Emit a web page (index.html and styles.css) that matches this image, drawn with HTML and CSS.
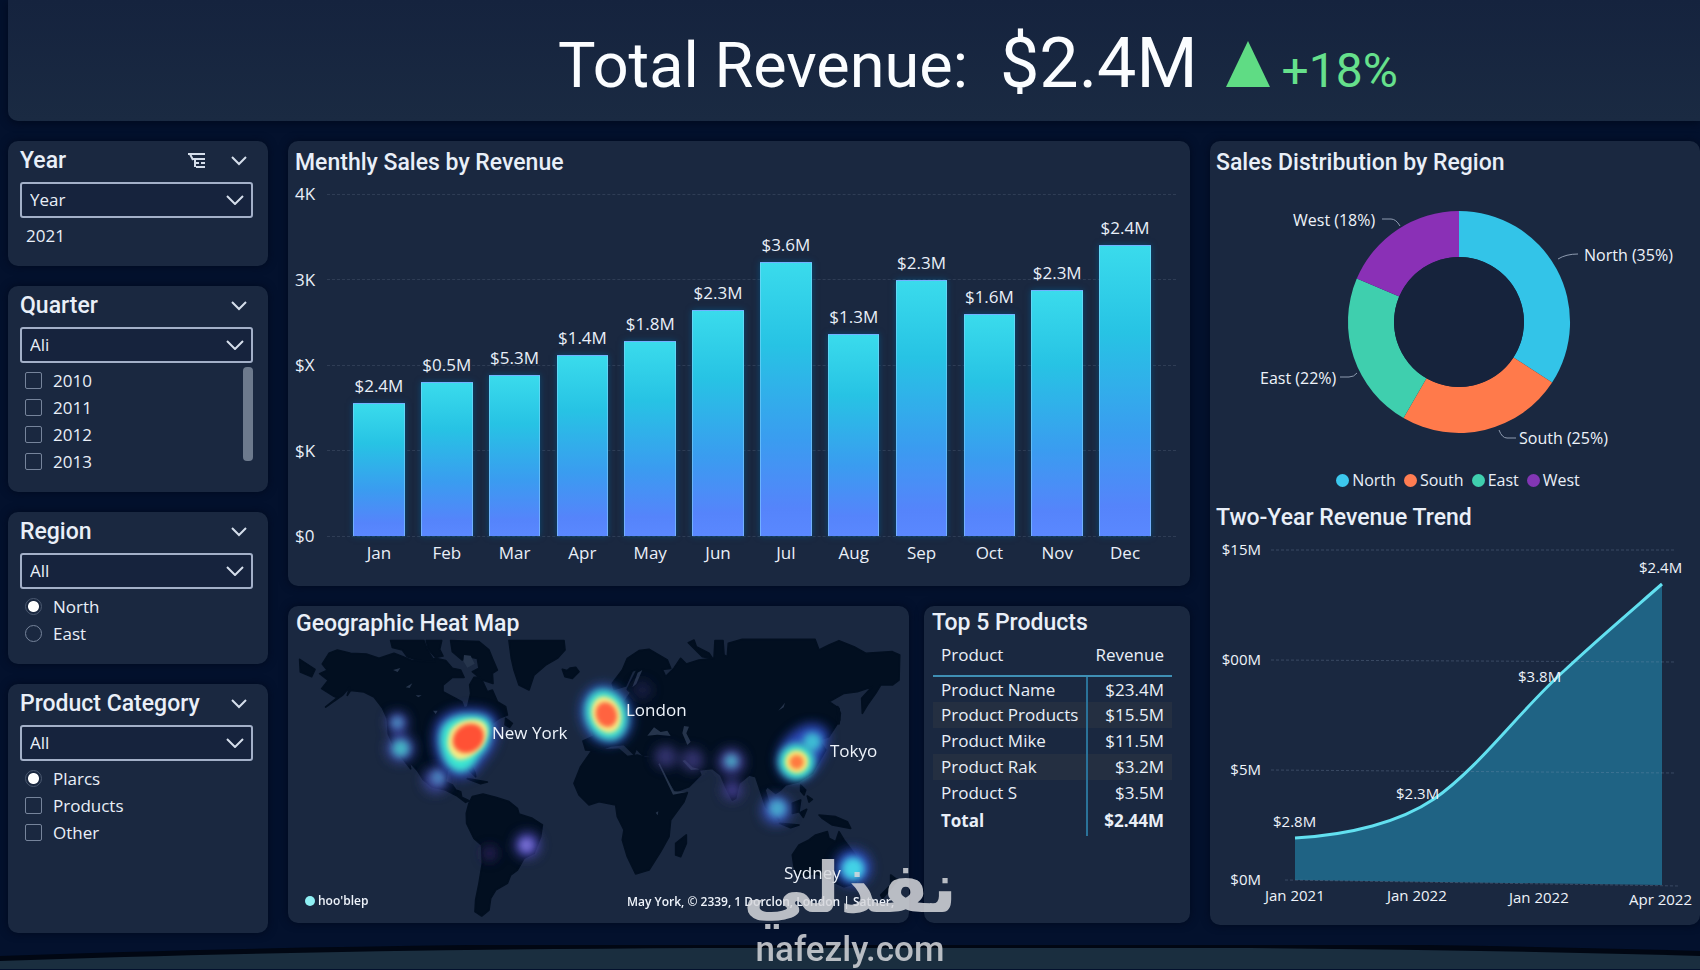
FILE: index.html
```html
<!DOCTYPE html>
<html lang="en">
<head>
    <meta charset="UTF-8">
    <meta name="viewport" content="width=device-width, initial-scale=1.0">
    <title>Total Revenue</title>
    <link rel="stylesheet" href="styles.css">
</head>
<body>
    <header class="headline">
        <h1>Total Revenue:</h1>
        <strong class="total">$2.4M</strong>
        <svg class="up" viewBox="0 0 44 46"><path d="M22 0 44 46H0z"/></svg>
        <span class="growth">+18%</span>
    </header>

    <main class="board">
        <aside class="filters">
            <section class="card filter">
                <div class="filter-head">
                    <h2>Year</h2>
                    <button class="icon-btn" aria-label="Filter">
                        <svg class="filter-icon" viewBox="0 0 20 18"><path d="M1 2h17M3 2l3 6M6 7h12M8 7v8M8 11h4M14 11h4M9 15h9"/></svg>
                    </button>
                    <button class="icon-btn" aria-label="Collapse Year"><svg class="chevron" viewBox="0 0 16 10"><path d="M1 1l7 7 7-7"/></svg></button>
                </div>
                <div class="select">
                    <select aria-label="Year"><option>Year</option></select>
                    <svg class="arrow" viewBox="0 0 18 10"><path d="M1 1l8 8 8-8"/></svg>
                </div>
                <p class="picked">2021</p>
            </section>

            <section class="card filter">
                <div class="filter-head">
                    <h2>Quarter</h2>
                    <button class="icon-btn" aria-label="Collapse Quarter"><svg class="chevron" viewBox="0 0 16 10"><path d="M1 1l7 7 7-7"/></svg></button>
                </div>
                <div class="select">
                    <select aria-label="Quarter"><option>Ali</option></select>
                    <svg class="arrow" viewBox="0 0 18 10"><path d="M1 1l8 8 8-8"/></svg>
                </div>
                <div class="options">
                    <div class="option-list">
                        <label><input type="checkbox">2010</label>
                        <label><input type="checkbox">2011</label>
                        <label><input type="checkbox">2012</label>
                        <label><input type="checkbox">2013</label>
                    </div>
                    <div class="scrollbar"></div>
                </div>
            </section>

            <section class="card filter">
                <div class="filter-head">
                    <h2>Region</h2>
                    <button class="icon-btn" aria-label="Collapse Region"><svg class="chevron" viewBox="0 0 16 10"><path d="M1 1l7 7 7-7"/></svg></button>
                </div>
                <div class="select">
                    <select aria-label="Region"><option>All</option></select>
                    <svg class="arrow" viewBox="0 0 18 10"><path d="M1 1l8 8 8-8"/></svg>
                </div>
                <div class="options">
                    <div class="option-list">
                        <label><input type="radio" name="region" checked>North</label>
                        <label><input type="radio" name="region">East</label>
                    </div>
                </div>
            </section>

            <section class="card filter filter-last">
                <div class="filter-head">
                    <h2>Product Category</h2>
                    <button class="icon-btn" aria-label="Collapse Product Category"><svg class="chevron" viewBox="0 0 16 10"><path d="M1 1l7 7 7-7"/></svg></button>
                </div>
                <div class="select">
                    <select aria-label="Product Category"><option>All</option></select>
                    <svg class="arrow" viewBox="0 0 18 10"><path d="M1 1l8 8 8-8"/></svg>
                </div>
                <div class="options">
                    <div class="option-list">
                        <label><input type="radio" name="category" checked>Plarcs</label>
                        <label><input type="checkbox">Products</label>
                        <label><input type="checkbox">Other</label>
                    </div>
                </div>
            </section>
        </aside>

        <div class="center">
            <section class="card monthly">
                <h2>Menthly Sales by Revenue</h2>
                <div class="chart">
                    <div class="rows">
                        <div class="row"><span>4K</span></div>
                        <div class="row"><span>3K</span></div>
                        <div class="row"><span>$X</span></div>
                        <div class="row"><span>$K</span></div>
                        <div class="row"><span>$0</span></div>
                    </div>
                    <div class="bars">
                        <div class="col"><span>$2.4M</span><div class="bar" style="height: 39%"></div></div>
                        <div class="col"><span>$0.5M</span><div class="bar" style="height: 45%"></div></div>
                        <div class="col"><span>$5.3M</span><div class="bar" style="height: 47%"></div></div>
                        <div class="col"><span>$1.4M</span><div class="bar" style="height: 53%"></div></div>
                        <div class="col"><span>$1.8M</span><div class="bar" style="height: 57%"></div></div>
                        <div class="col"><span>$2.3M</span><div class="bar" style="height: 66%"></div></div>
                        <div class="col"><span>$3.6M</span><div class="bar" style="height: 80%"></div></div>
                        <div class="col"><span>$1.3M</span><div class="bar" style="height: 59%"></div></div>
                        <div class="col"><span>$2.3M</span><div class="bar" style="height: 75%"></div></div>
                        <div class="col"><span>$1.6M</span><div class="bar" style="height: 65%"></div></div>
                        <div class="col"><span>$2.3M</span><div class="bar" style="height: 72%"></div></div>
                        <div class="col"><span>$2.4M</span><div class="bar" style="height: 85%"></div></div>
                    </div>
                </div>
                <div class="months">
                    <span>Jan</span><span>Feb</span><span>Mar</span><span>Apr</span><span>May</span><span>Jun</span>
                    <span>Jul</span><span>Aug</span><span>Sep</span><span>Oct</span><span>Nov</span><span>Dec</span>
                </div>
            </section>

            <section class="card geo">
                <h2>Geographic Heat Map</h2>
                <svg class="map" viewBox="0 0 621 288">
                    <defs>
                        <filter id="soft" x="-60%" y="-60%" width="220%" height="220%"><feGaussianBlur stdDeviation="16"/></filter>
                        <filter id="mid" x="-60%" y="-60%" width="220%" height="220%"><feGaussianBlur stdDeviation="11"/></filter>
                        <filter id="crisp" x="-60%" y="-60%" width="220%" height="220%"><feGaussianBlur stdDeviation="6"/></filter>
                    </defs>
                    <svg width="621" height="288" viewBox="27 135 1863 864">
                        <g class="land">
                            <!-- Americas -->
                            <path d="M62 208l46 30-10 22-34-14z"/>
                            <path d="M130 222l20-32 25-10 40 10 47 2 38 13 45-15 27 10 28 12 40 3 30-10 30 7 20 23 25 5 10 22h-35l-28 23v20l28 15 28 15 8 20 10-5 9-40-3-25 13-23h20l20 43 15-5 15 35 25 15 5 25-25 10-20 15-15 25-17 35-18 30-18 25 16 33 2 12-15-15-15-20-30 5-25 10-5 35 20 10 10 15 15 5 3 17 22 10-10 5-25-19-35-18-40-9-28-23-17-27-25-27 5 22-20-25-30-40-17-40-3-45-15-33-25-32-30-15-40-5-10 15 7-25-22 25-50 35 35-28-10-4-37-23 20-25-26-20 23-10z"/>
                            <path d="M335 152h100l10 28 22 35-47-3-35-12-15-20-30-8z"/>
                            <path d="M442 152h46l-6 26 10 20-22 4-22-24z"/>
                            <path d="M515 152l85 3 30 25 10 25 15 35-15 10 2 30-32-10-30-25 20-10-5-30-25-5-20 10-30-25z"/>
                            <path d="M690 152h165l3 28-23 25-35 20-35 30-15 45-30-15-15-45-8-35z"/>
                            <path d="M850 238l14 4 10-8 16-2 10 13-20 20-22-5z"/>
                            <path d="M570 640l10-20 32-8 38 10 40 13 25 20 5 17 40 13 30 20-5 35-20 50-30 15-20 35-20 15-10 25-35 20-15 25-5 35-22 18-20-13 2-35 10-50 10-60-2-55-23-20-22-45-1-30z"/>
                            <path d="M565 566l60 10-20 5zM680 385l20 15-8 12-14-8z"/>
                            <!-- Africa -->
                            <path d="M940 480l80-2 25 22 30-5 25 8 30-2 12 24 38 80 8 8 37-5-10 27-40 55-5 50-25 45-35 55-40 12-25-52-15-50 5-30-20-40-5-35-50-10-30 10-30-30-15-35 20-50z"/>
                            <path d="M1190 760l32-25v25l-17 40-15-5z"/>
                        </g>
                        <g class="land" transform="translate(960)">
                            <!-- Europe and Asia -->
                            <path d="M40 280l30-40 15-35 35-23 30-4 55 32 10 25-25 3 10 22 25-25 20-30 17 17 38-12 45-5 3-53h24l3 43 10 5 3-40 42-12h218l12 32 30-15 30-13 45 18 35 20 80-5 22 10-2 75-20 15h-35l-15 25-25 35-15 25-2-45 32-35-45 15-40 5-45 25 30 20 2 35-32 50-30 10 20 30-40 70-40 25-40 10-15 15-15 10-25-20-7 10 12 40 30 50-40-40-20-60-10-30-20-5-30 25-10 45-10 5-20-40-15-35-25-20-40 5 5 15-35 35-40 15-50-80-15-25-35-5-18-20-7 18-30-30-40 5-40 15-35-3-8-27 33-15-10-30 30-20 30-30 40-20 20-30-10-10 10-20 20-40-15 5-20 45-35 10z"/>
                            <path d="M268 158l17-8 7 20 38 20 10 15-30-5z"/>
                            <path d="M-12 330l24-22 12 70-38 12z"/>
                            <!-- Islands and Oceania -->
                            <path d="M716 350l8 20-4 32-8-10zM605 585l15 15-5 15-10-12zM625 618l15 10-10 8zM580 640l25-10-5 35-20 5zM603 668l20-10-10 24zM542 700l58 5-25 8z"/>
                            <path d="M660 675l50 5 35 15 10 20-55-10-30-20z"/>
                            <path d="M580 795l20-30 30-15 20-15 35-10 5 20 20 10 10-30 15 25 30 40 20 40-15 50-35 10-45-20-40-20-50 10-15-30z"/>
                            <path d="M875 855l20 15-15 20-30 35-5-10 30-30z"/>
                        </g>
                        <g class="water" transform="translate(960)">
                            <path d="M145 437l20-25 20 14 20-4 10 16-40-4z"/>
                            <path d="M255 408l15 2-8 20 13 25-10 10-15-35z"/>
                            <path d="M112 282l18-42-14 8-16 44zM250 512l26 28 26-2-22-6-22-22z"/>
                            <path d="M538 362l20-24-4 14zM170 668l8-4-2 12z"/>
                            <path d="M178 522l4-2 42 84 40 2-42 8z"/>
                        </g>
                        <g class="water">
                            <path d="M342 240l22-6-8 12zM380 292l20-12-8 14zM410 316h18l-10 6zM462 362h14l-6 10zM555 195l20 2 12 24-22 12-12-20z"/>
                        </g>

                        <!-- faint spots -->
                        <g filter="url(#soft)">
                            <circle cx="355" cy="398" r="32" fill="#4048a0"/>
                            <circle cx="365" cy="475" r="42" fill="#3c48a0"/>
                            <circle cx="470" cy="570" r="38" fill="#3e4698"/>
                            <circle cx="745" cy="765" r="38" fill="#4a46a8"/>
                            <circle cx="632" cy="790" r="22" fill="#2b2458"/>
                            <circle cx="1160" cy="500" r="34" fill="#3d3c80" opacity=".8"/>
                            <circle cx="1240" cy="510" r="34" fill="#3d3c80" opacity=".8"/>
                            <circle cx="1357" cy="515" r="40" fill="#433f90"/>
                            <circle cx="1360" cy="600" r="30" fill="#3e3a86"/>
                            <circle cx="1492" cy="660" r="44" fill="#3850b0"/>
                            <circle cx="1090" cy="300" r="30" fill="#2c2a60" opacity=".5"/>
                        </g>
                        <g filter="url(#mid)">
                            <circle cx="355" cy="398" r="16" fill="#4c8fc0"/>
                            <circle cx="365" cy="475" r="25" fill="#45b4c4"/>
                            <circle cx="478" cy="562" r="20" fill="#4c84bc"/>
                            <circle cx="742" cy="765" r="18" fill="#7a72d6"/>
                            <circle cx="1357" cy="513" r="20" fill="#49a2c2"/>
                            <circle cx="1495" cy="655" r="26" fill="#46a6cc"/>
                        </g>
                        <!-- New York -->
                        <path filter="url(#soft)" fill="#3346b4" d="M472 400q30-46 95-44 92-6 90 60-4 60-42 96-32 52-72 54-50-6-70-66-18-56-1-100z"/>
                        <path filter="url(#mid)" fill="#3be6d2" d="M490 410q26-36 78-36 72-4 70 44-4 54-38 82-24 46-58 46-38-6-54-58-14-44 2-78z"/>
                        <path filter="url(#crisp)" fill="#f6ec86" d="M514 420q24-32 66-32 44 0 46 36-2 40-38 66-28 24-54 18-44-30-20-88z"/>
                        <ellipse filter="url(#crisp)" cx="568" cy="445" rx="49" ry="41" transform="rotate(-35 568 445)" fill="#ff5136"/>
                        <!-- London -->
                        <g transform="rotate(-20 982 374)">
                            <ellipse filter="url(#soft)" cx="982" cy="374" rx="76" ry="92" fill="#2c4eb0"/>
                            <ellipse filter="url(#mid)" cx="982" cy="374" rx="62" ry="78" fill="#3fe0cc"/>
                            <ellipse filter="url(#crisp)" cx="982" cy="374" rx="43" ry="56" fill="#f6ec84"/>
                            <ellipse filter="url(#crisp)" cx="982" cy="374" rx="31" ry="38" fill="#ff6340"/>
                        </g>
                        <!-- Tokyo -->
                        <path filter="url(#soft)" fill="#2f49ba" d="M1495 500q10-60 80-95 60-15 75 30-10 60-35 95-40 60-95 35-30-25-25-65z"/>
                        <circle filter="url(#mid)" cx="1600" cy="455" r="28" fill="#3cbcd4"/>
                        <circle filter="url(#mid)" cx="1553" cy="515" r="54" fill="#3ee0cc"/>
                        <circle filter="url(#crisp)" cx="1553" cy="515" r="35" fill="#f4e878"/>
                        <circle filter="url(#crisp)" cx="1553" cy="516" r="21" fill="#ff7a40"/>
                        <!-- Sydney -->
                        <circle filter="url(#soft)" cx="1722" cy="832" r="54" fill="#2f4cbc"/>
                        <circle filter="url(#mid)" cx="1722" cy="836" r="34" fill="#43d2e6"/>
                    </svg>
                    <text x="204" y="104">New York</text>
                    <text x="338" y="81">London</text>
                    <text x="542" y="122">Tokyo</text>
                    <text x="496" y="244">Sydney</text>
                    <circle cx="22" cy="266" r="5" fill="#8ff0f4"/>
                    <g class="credits">
                        <text x="30" y="270">hoo'blep</text>
                        <text x="339" y="271">May York, © 2339, 1 Dorclon, London | Satner,</text>
                    </g>
                </svg>
            </section>

            <section class="card products">
                <h2>Top 5 Products</h2>
                <table>
                    <thead>
                        <tr><th>Product</th><th>Revenue</th></tr>
                    </thead>
                    <tbody>
                        <tr><td>Product Name</td><td>$23.4M</td></tr>
                        <tr><td>Product Products</td><td>$15.5M</td></tr>
                        <tr><td>Product Mike</td><td>$11.5M</td></tr>
                        <tr><td>Product Rak</td><td>$3.2M</td></tr>
                        <tr><td>Product S</td><td>$3.5M</td></tr>
                    </tbody>
                    <tfoot>
                        <tr><td>Total</td><td>$2.44M</td></tr>
                    </tfoot>
                </table>
            </section>
        </div>

        <section class="card trends">
            <h2>Sales Distribution by Region</h2>
            <svg class="donut" viewBox="0 0 490 293">
                <!-- centre 249,147, outer radius 111, inner radius 65 -->
                <path fill="#33c4e8" d="M249 36A111 111 0 0 1 342.1 207.5L303.5 182.4A65 65 0 0 0 249 82z"/>
                <path fill="#ff7a4b" d="M342.1 207.5A111 111 0 0 1 193.5 243.1L216.5 203.3A65 65 0 0 0 303.5 182.4z"/>
                <path fill="#3fcfae" d="M193.5 243.1A111 111 0 0 1 146.8 103.6L189.2 121.6A65 65 0 0 0 216.5 203.3z"/>
                <path fill="#8a30b6" d="M146.8 103.6A111 111 0 0 1 249 36V82A65 65 0 0 0 189.2 121.6z"/>
                <circle cx="249" cy="147" r="65" fill="#16233c"/>
                <g class="leader">
                    <path d="M172 44h9q5 0 9 7"/>
                    <path d="M348 84q8-5 20-5"/>
                    <path d="M130 202h9q5 0 8-4"/>
                    <path d="M289 255q3 8 8 8h9"/>
                </g>
                <text x="83" y="51">West (18%)</text>
                <text x="374" y="86">North (35%)</text>
                <text x="50" y="209">East (22%)</text>
                <text x="309" y="269">South (25%)</text>
            </svg>
            <ul class="legend">
                <li class="north">North</li>
                <li class="south">South</li>
                <li class="east">East</li>
                <li class="west">West</li>
            </ul>
            <h2>Two-Year Revenue Trend</h2>
            <svg class="trend" viewBox="0 0 490 380">
                <path class="area" d="M85 308C140 305 190 292 224 269C270 237 310 180 355 140C387 110 420 82 452 54V355L85 350z"/>
                <g class="gridline">
                    <path d="M61 20H465M61 130l404 2M61 240l404 3M75 350l395 6"/>
                </g>
                <path class="line" d="M85 308C140 305 190 292 224 269C270 237 310 180 355 140C387 110 420 82 452 54"/>
                <g class="axis-y">
                    <text x="51" y="25">$15M</text>
                    <text x="51" y="135">$00M</text>
                    <text x="51" y="245">$5M</text>
                    <text x="51" y="355">$0M</text>
                </g>
                <text x="63" y="297">$2.8M</text>
                <text x="186" y="269">$2.3M</text>
                <text x="308" y="152">$3.8M</text>
                <text x="429" y="43">$2.4M</text>
                <text x="55" y="371">Jan 2021</text>
                <text x="177" y="371">Jan 2022</text>
                <text x="299" y="373">Jan 2022</text>
                <text x="419" y="375">Apr 2022</text>
            </svg>
        </section>
    </main>

    <svg class="desk" viewBox="0 0 1700 24" preserveAspectRatio="none">
        <path fill="#010713" d="M0 11Q300 0 700-2H1250Q1500 0 1700 6V24H0z"/>
        <path fill="#1a2e3f" d="M0 16Q300 5 700 3H1250Q1500 5 1700 11V24H0z"/>
    </svg>

    <div class="watermark">
        <span class="mark-ar" lang="ar" dir="rtl">نفذلي</span>
        <span class="mark-en">nafezly.com</span>
    </div>
</body>
</html>
```

FILE: styles.css
```css
* {
    box-sizing: border-box;
}
body {
    margin: 0;
    position: relative;
    overflow-x: hidden;
    background-color: #03112d;
    color: #e9eff8;
    font-family: "Open Sans", "Noto Sans", sans-serif;
    font-size: 17px;
    font-weight: 500;
    line-height: 24px;
}
h1, h2, p, ul {
    margin: 0;
    padding: 0;
}
h2 {
    font-family: Roboto, sans-serif;
    font-size: 23px;
    font-weight: 500;
    line-height: 24px;
}

/* headline */
.headline {
    display: flex;
    align-items: baseline;
    justify-content: center;
    height: 121px;
    margin-left: 8px;
    padding: 18px 0 0 248px;
    border-bottom-left-radius: 10px;
    background: linear-gradient(#15233e, #1a2a42);
    box-shadow: 0 2px 8px #010a1e;
    font-family: Roboto, sans-serif;
    line-height: 90px;
    color: #fbfdff;
}
.headline h1 {
    font-size: 63px;
    font-weight: 400;
    line-height: 90px;
}
.total {
    margin-left: 32px;
    font-size: 70px;
    font-weight: 400;
}
.up {
    width: 44px;
    height: 46px;
    margin: 0 12px 0 28px;
    fill: #5fdc84;
}
.growth {
    font-size: 48px;
    font-weight: 400;
    color: #66e08c;
}

/* layout */
.board {
    display: grid;
    grid-template-columns: 260px minmax(0, 1fr) 490px;
    gap: 20px;
    align-items: start;
    margin: 20px 0 0 8px;
}
.card {
    padding-top: 10px;
    border-radius: 10px;
    background-color: #1a2840;
    box-shadow: 0 0 8px #010a1e;
}
.filters {
    display: grid;
    gap: 20px;
}
.center {
    display: grid;
    grid-template-columns: minmax(0, 1fr) 266px;
    gap: 20px 15px;
}

/* filters */
.filter {
    padding: 8px 15px 17px 12px;
}
.filter-last {
    min-height: 249px;
}
.filter-head {
    display: flex;
    align-items: center;
    gap: 24px;
    padding-right: 6px;
}
.filter-head h2 {
    flex: 1;
    white-space: nowrap;
}
.icon-btn {
    display: flex;
    padding: 0;
    border: none;
    background: none;
    cursor: pointer;
}
.chevron, .arrow, .filter-icon {
    fill: none;
    stroke: #d5deeb;
    stroke-width: 2;
}
.chevron {
    width: 16px;
    height: 10px;
}
.filter-icon {
    width: 20px;
    height: 18px;
}
.select {
    display: grid;
    align-items: center;
    margin-top: 9px;
}
.select select, .select .arrow {
    grid-area: 1 / 1;
}
.select select {
    appearance: none;
    width: 100%;
    height: 36px;
    padding: 0 8px;
    border: 2px solid #a3b0c8;
    border-radius: 3px;
    background-color: #16233d;
    color: inherit;
    font: inherit;
}
.select .arrow {
    justify-self: end;
    width: 18px;
    height: 10px;
    margin-right: 9px;
    pointer-events: none;
}
.picked {
    margin-top: 4px;
    padding-left: 6px;
    line-height: 27px;
}
.options {
    display: flex;
    justify-content: space-between;
    margin-top: 4px;
    padding-left: 5px;
}
.option-list label {
    display: flex;
    align-items: center;
    gap: 11px;
    height: 27px;
}
.option-list input {
    appearance: none;
    width: 17px;
    height: 17px;
    margin: 0;
    border: 1px solid #76849b;
    border-radius: 2px;
}
.option-list input[type="radio"] {
    border-radius: 50%;
}
.option-list input:checked {
    border-color: #4b5970;
    background: radial-gradient(circle, #fff 5px, transparent 6px);
}
.scrollbar {
    width: 10px;
    height: 94px;
    border-radius: 4px;
    background-color: #6d7a8d;
}

/* monthly sales */
.monthly {
    grid-column: 1 / -1;
    padding: 10px 14px 21px 7px;
}
.chart {
    display: grid;
    margin-top: 7px;
}
.rows, .bars {
    grid-area: 1 / 1;
}
.rows {
    display: flex;
    flex-direction: column;
    justify-content: space-between;
    height: 366px;
}
.row {
    display: flex;
    align-items: center;
}
.row span {
    width: 32px;
}
.row::after {
    content: "";
    flex: 1;
    border-top: 1px dashed #2f3d55;
}
.bars {
    display: flex;
    height: 342px;
    margin: 12px 17px 0 50px;
}
.col {
    flex: 1;
    display: flex;
    flex-direction: column;
    justify-content: flex-end;
    align-items: center;
}
.col span {
    margin-bottom: 5px;
}
.bar {
    flex-shrink: 0;
    width: 76%;
    border: 1px solid rgba(140, 215, 255, 0.5);
    border-bottom: none;
    background: linear-gradient(#3adbec, #27c3e4 30%, #3a9cf0 65%, #5584fb 90%, #5a88ff);
    box-shadow: 0 0 6px rgba(0, 90, 140, 0.7);
}
.months {
    display: flex;
    margin: -7px 17px 0 50px;
}
.months span {
    flex: 1;
    text-align: center;
}

/* map */
.geo {
    padding-top: 6px;
}
.geo h2, .products h2 {
    padding-left: 8px;
}
.map {
    display: block;
    width: 100%;
    margin-top: -1px;
    fill: #eef3fa;
}
.land {
    fill: #020f20;
    stroke: #020f20;
    stroke-width: 5;
    stroke-linejoin: round;
}
.water {
    fill: #26354c;
}
.credits {
    font-size: 12px;
    font-weight: 600;
}

/* table */
.products {
    padding: 5px 18px 0 0;
}
table {
    width: calc(100% - 9px);
    margin-left: 9px;
    border-collapse: collapse;
}
th {
    height: 41px;
    padding: 0 8px;
    border-bottom: 2px solid #3f8fb4;
    font-weight: 500;
    text-align: left;
}
td {
    height: 26px;
    padding: 0 8px;
    white-space: nowrap;
}
th:last-child, td:last-child {
    text-align: right;
}
td:first-child {
    border-right: 2px solid #2a7299;
}
tbody tr:nth-child(even) {
    background-color: #242f41;
}
tfoot td {
    height: 30px;
    font-weight: 700;
}

/* right column */
.trends {
    min-height: 784px;
}
.trends h2 {
    padding-left: 6px;
}
.donut, .trend {
    display: block;
    width: 100%;
    fill: #eef3fa;
}
.donut {
    font-size: 16px;
}
.leader {
    fill: none;
    stroke: #8e9bb0;
}
.legend {
    display: flex;
    justify-content: center;
    gap: 8px;
    margin: 0 0 14px 6px;
    font-size: 16px;
    list-style: none;
}
.legend li {
    display: flex;
    align-items: center;
    gap: 3px;
}
.legend li::before {
    content: "";
    width: 13px;
    height: 13px;
    border-radius: 50%;
    background-color: currentColor;
}
.north::before { color: #3cc8ee; }
.south::before { color: #ff7d52; }
.east::before { color: #3fcfae; }
.west::before { color: #8236b4; }
.trend {
    font-size: 15px;
}
.gridline {
    fill: none;
    stroke: rgba(130, 150, 180, 0.3);
    stroke-dasharray: 3 2;
}
.axis-y {
    text-anchor: end;
}
.area {
    fill: #1f6384;
}
.line {
    fill: none;
    stroke: #62e0f0;
    stroke-width: 3;
}

/* bottom edge */
.desk {
    display: block;
    width: 100%;
    height: 24px;
    margin-top: 12px;
}
.watermark {
    position: absolute;
    left: 0;
    right: 0;
    bottom: 0;
    display: flex;
    flex-direction: column;
    align-items: center;
    color: #d6d8dc;
    opacity: 0.85;
    pointer-events: none;
}
.mark-ar {
    font-family: "DejaVu Sans", sans-serif;
    font-size: 70px;
    font-weight: 700;
    line-height: 86px;
}
.mark-en {
    font-family: Roboto, sans-serif;
    font-size: 35px;
    font-weight: 500;
    line-height: 38px;
}
```
